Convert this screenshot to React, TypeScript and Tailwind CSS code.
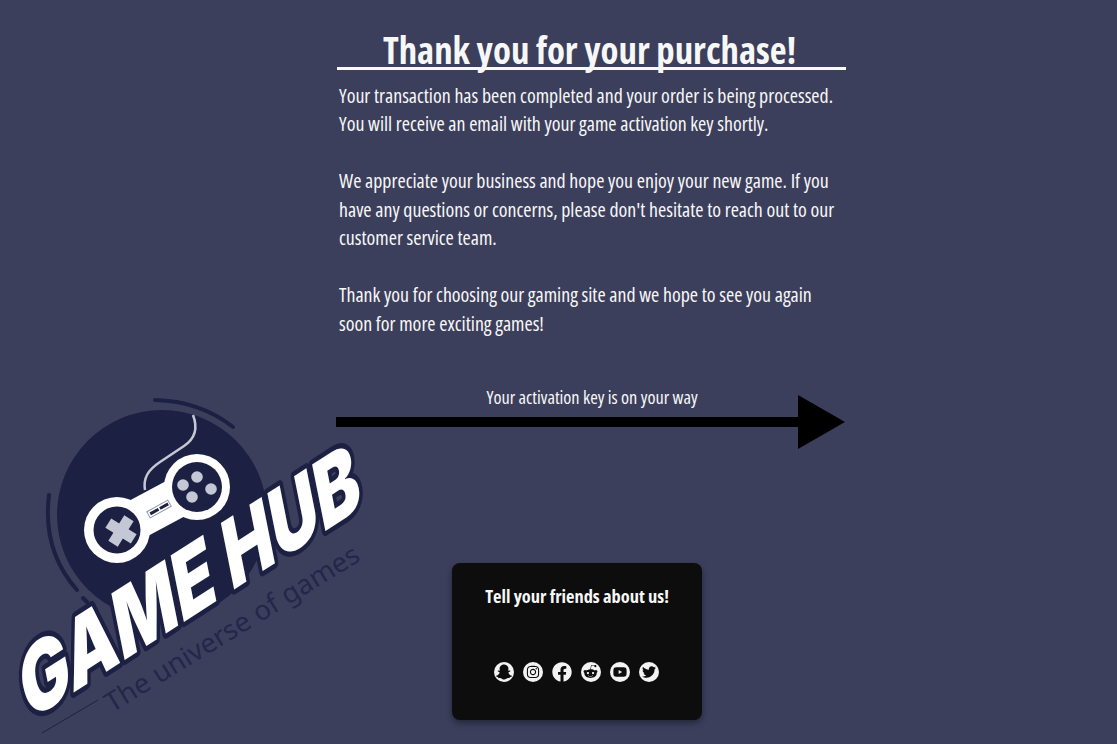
import type { ReactNode } from "react";
import { FaFacebook, FaInstagram, FaRedditAlien, FaSnapchatGhost, FaTwitter, FaYoutube } from "react-icons/fa";

function Logo() {
  return (
    <svg viewBox="0 0 400 354" className="absolute left-0 top-[390px] h-[354px] w-[400px]">
      <circle cx="162" cy="125" r="105" fill="#1c2143" />
      <path d="M155 10 Q200 11 233 37" fill="none" stroke="#1c2143" strokeWidth="4" strokeLinecap="round" />
      <path d="M49 105 C44 145 55 175 77 200" fill="none" stroke="#1c2143" strokeWidth="4" strokeLinecap="round" />
      <path d="M83 208 L87 212" fill="none" stroke="#1c2143" strokeWidth="4" strokeLinecap="round" />
      <path d="M193 25 C198 38 196 48 184 56 L160 72 C148 80 143 88 145 100" fill="none" stroke="#c3c8d4" strokeWidth="2.5" />
      <path d="M117 140 L197 97" stroke="#fff" strokeWidth="40" />
      <circle cx="117" cy="140" r="33" fill="#fff" />
      <circle cx="197" cy="97" r="33" fill="#fff" />
      <circle cx="117" cy="140" r="23.5" fill="#1c2143" />
      <circle cx="197" cy="97" r="25" fill="#1c2143" />
      <g transform="rotate(32 121 141)" fill="#c3c8d4">
        <rect x="115.5" y="126" width="11" height="30" />
        <rect x="106" y="135.5" width="30" height="11" />
      </g>
      <circle cx="197" cy="87" r="5.8" fill="#c3c8d4" />
      <circle cx="211" cy="99" r="5.8" fill="#c3c8d4" />
      <circle cx="192" cy="107" r="5.8" fill="#c3c8d4" />
      <circle cx="183" cy="95" r="5.8" fill="#c3c8d4" />
      <g transform="rotate(-29 159 119)">
        <rect x="147" y="115.5" width="24" height="7" fill="#fff" stroke="#8f95a8" strokeWidth="1" />
        <rect x="149" y="117.5" width="9.5" height="3" fill="#1c2143" />
        <rect x="160" y="117.5" width="9.5" height="3" fill="#1c2143" />
      </g>
      <text
        transform="matrix(0.84 -0.54 0.196 0.98 28 332)"
        textLength="400"
        lengthAdjust="spacingAndGlyphs"
        fontFamily="Inter, 'Liberation Sans', sans-serif"
        fontWeight="900"
        fontSize="93"
        fill="#fff"
        stroke="#1c2143"
        strokeWidth="10"
        strokeLinejoin="round"
        paintOrder="stroke"
      >
        GAME HUB
      </text>
      <text
        transform="translate(112 323) rotate(-31.5)"
        fontFamily="'Noto Sans','Open Sans',sans-serif"
        fontSize="27"
        fill="#23274a"
        textLength="293"
        lengthAdjust="spacingAndGlyphs"
      >
        The universe of games
      </text>
      <path d="M42 343 L98 310" stroke="#1c2143" strokeWidth="1" />
    </svg>
  );
}

function SocialIcon({ children }: { children: ReactNode }) {
  return (
    <span className="flex h-5 w-5 items-center justify-center overflow-hidden rounded-full bg-[#f3f3f3] text-[#0d0d0d]">
      {children}
    </span>
  );
}

export default function App() {
  return (
    <div className="relative h-[744px] w-full overflow-hidden bg-[#3c3f5c] font-['Open_Sans',sans-serif] text-[#f7f7f7] [font-stretch:75%]">
      <Logo />
      <main className="relative ml-[337px] flex w-[509px] flex-col items-stretch pt-[28px]">
        <h1 className="h-[42px] whitespace-nowrap border-b-[3px] border-[#f9f9f9] pr-[4px] text-center text-[36.8px] font-bold leading-[44px]">
          Thank you for your purchase!
        </h1>
        <div className="mt-[11.5px] flex flex-col gap-[28.5px] whitespace-nowrap pl-[2px] text-[19.9px] leading-[28.5px]">
          <p>
            Your transaction has been completed and your order is being processed.
            <br />
            You will receive an email with your game activation key shortly.
          </p>
          <p>
            We appreciate your business and hope you enjoy your new game. If you
            <br />
            have any questions or concerns, please don't hesitate to reach out to our
            <br />
            customer service team.
          </p>
          <p>
            Thank you for choosing our gaming site and we hope to see you again
            <br />
            soon for more exciting games!
          </p>
        </div>
        <p className="mt-[45.5px] pl-[1px] text-center text-[18.3px] leading-[26px]">Your activation key is on your way</p>
        <svg viewBox="0 0 510 56" className="mt-[-16px] h-[56px] w-[510px] -translate-x-px">
          <rect x="0" y="23" width="465" height="10" fill="#000" />
          <path d="M462 1 L509 28 L462 55 Z" fill="#000" />
        </svg>
        <section className="ml-[115px] mt-[113px] flex h-[157px] w-[250px] flex-col items-center rounded-[8px] bg-[#0d0d0d] shadow-[0_3px_6px_rgba(0,0,0,0.4)]">
          <h2 className="mt-[19px] text-[18.4px] font-bold leading-[28px]">Tell your friends about us!</h2>
          <div className="mt-[52px] flex -translate-x-px gap-[9px]">
            <SocialIcon><FaSnapchatGhost size={16} /></SocialIcon>
            <SocialIcon><FaInstagram size={14} /></SocialIcon>
            <FaFacebook size={20} className="text-[#f3f3f3]" />
            <SocialIcon><FaRedditAlien size={15} /></SocialIcon>
            <SocialIcon><FaYoutube size={14} /></SocialIcon>
            <SocialIcon><FaTwitter size={14} /></SocialIcon>
          </div>
        </section>
      </main>
    </div>
  );
}
